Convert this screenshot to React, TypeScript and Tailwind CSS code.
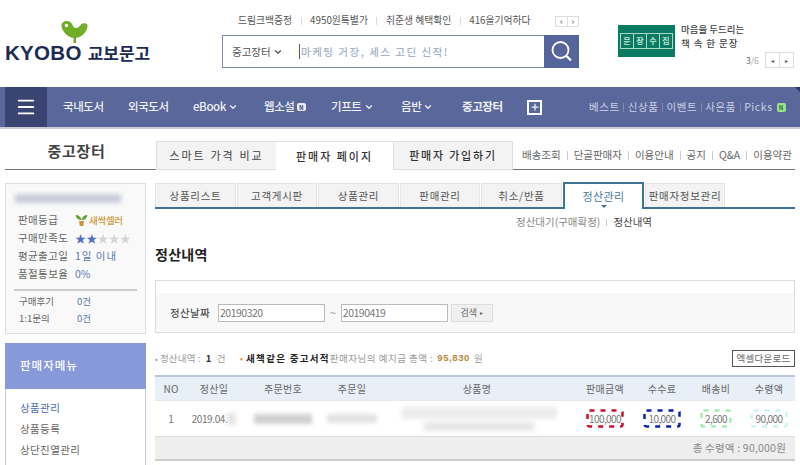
import React from "react";
import { ChevronDown, Menu, Plus } from "lucide-react";

const font = { fontFamily: '"Noto Sans CJK KR", "Liberation Sans", sans-serif' };

const utilLinks = ["드림크백증정", "4950원특별가", "취준생 혜택확인", "416을기억하다"];
const subLinks = ["배송조회", "단골판매자", "이용안내", "공지", "Q&A", "이용약관"];
const subTabs = [
  { label: "상품리스트", w: "w-[81px]" },
  { label: "고객게시판", w: "w-[80px]" },
  { label: "상품관리", w: "w-[81px]" },
  { label: "판매관리", w: "w-[80px]" },
  { label: "취소/반품", w: "w-[81px]" },
  { label: "정산관리", w: "w-[81px]", active: true },
  { label: "판매자정보관리", w: "w-[80px]" },
];
const cols = ["NO", "정산일", "주문번호", "주문일", "상품명", "판매금액", "수수료", "배송비", "수령액"];
const gridCols = "grid grid-cols-[32px_54px_84px_54px_196px_60px_54px_54px_52px]";

function Blur({ className }: { className: string }) {
  return <div className={`blur-[2px] ${className}`} />;
}

function Bird() {
  return (
    <svg width="27" height="22" viewBox="0 0 27 22">
      <path d="M12.5 15 L12.5 22 L15 22 L15 15 Z" fill="#72ad28" />
      <path
        d="M0.5 4.5 C0.5 1.5 3 0 6 0 C9.5 0 11.5 3 12.5 6 C14.5 8 18 7 20.5 3 C22 2 26 2 26.5 4 C27 10 21 17 13.5 17 C7 17 0.5 10 0.5 4.5 Z"
        fill="#72ad28"
      />
      <circle cx="5.5" cy="4.5" r="1.7" fill="#fff" />
    </svg>
  );
}

function Header() {
  return (
    <div className="flex h-[87px] bg-white">
      <div className="relative w-[222px] shrink-0">
        <div className="absolute left-[61px] top-[21px]">
          <Bird />
        </div>
        <div className="absolute left-[5px] top-[39px] flex items-baseline gap-[6px] whitespace-nowrap text-[#1c2c55]">
          <span className="text-[20.5px] font-bold leading-[28px] tracking-[0.3px]" style={{ fontFamily: '"Liberation Sans", sans-serif' }}>
            KYOBO
          </span>
          <span className="text-[17px] font-bold leading-[28px]">교보문고</span>
        </div>
      </div>

      <div className="w-[357px] shrink-0 pt-[14px]">
        <div className="flex h-[14px] items-center pl-[16px] text-[9.8px] leading-none text-[#555]">
          {utilLinks.map((t, i) => (
            <React.Fragment key={t}>
              {i > 0 && <span className="mx-[8.5px] h-[8px] w-px bg-[#ddd]" />}
              <span className="whitespace-nowrap">{t}</span>
            </React.Fragment>
          ))}
          <div className="ml-auto flex h-[11px] w-[24px] border border-[#ddd] text-[9px] text-[#555]">
            <span className="flex flex-1 items-center justify-center border-r border-[#ddd]">‹</span>
            <span className="flex flex-1 items-center justify-center">›</span>
          </div>
        </div>
        <div className="mt-[7px] flex h-[33px] border border-r-0 border-[#7d88ac]">
          <div className="flex w-[76px] items-center pl-[9px] text-[10.5px] text-[#555]">
            중고장터
            <ChevronDown size={10} strokeWidth={3} className="ml-[2px]" />
          </div>
          <div className="flex flex-1 items-center">
            <span className="h-[15px] w-px bg-[#555]" />
            <span className="ml-px whitespace-nowrap text-[10.5px] font-medium tracking-[1.5px] text-[#a3b2c6]">마케팅 거장, 세스 고딘 신작!</span>
          </div>
          <div className="-my-px flex w-[35px] items-center justify-center bg-[#55649b]">
            <svg width="23" height="23" viewBox="0 0 23 23" fill="none" stroke="#fff" strokeWidth="1.8">
              <circle cx="10.5" cy="10" r="8" />
              <path d="M16.5 16 L21 20.5" strokeWidth="2.4" />
            </svg>
          </div>
        </div>
      </div>

      <div className="relative flex-1">
        <div className="absolute left-[39px] top-[25px] flex h-[32px] w-[57px] items-center justify-center bg-[#0b7a63]">
          <div className="flex h-[16px] w-[53px] border border-[#a9d8c6] text-[8px] font-bold text-[#bfe6d4]">
            {["문", "장", "수", "집"].map((c) => (
              <span key={c} className="flex flex-1 items-center justify-center border-r border-[#a9d8c6] last:border-r-0">
                {c}
              </span>
            ))}
          </div>
        </div>
        <div className="absolute left-[102px] top-[22px] text-[9.5px] font-medium leading-[14px] text-[#444]">
          <div>마음을 두드리는</div>
          <div className="tracking-[0.9px]">책 속 한 문장</div>
        </div>
        <div className="absolute left-[167px] top-[52px] flex items-center text-[8.5px] text-[#666]">
          <span>
            3<span className="text-[#aaa]">/6</span>
          </span>
          <div className="ml-[6px] flex h-[16px] w-[29px] border border-[#ddd] text-[6px] text-[#555]">
            <span className="flex flex-1 items-center justify-center border-r border-[#ddd]">◂</span>
            <span className="flex flex-1 items-center justify-center">▸</span>
          </div>
        </div>
      </div>
    </div>
  );
}

function Nav() {
  return (
    <div className="relative flex h-[42px] border-b-2 border-[#c9ccd6] bg-[#5a679b] pl-[5px] text-white">
      <div className="flex w-[42px] items-center justify-center bg-[#3a4473]">
        <Menu size={22} strokeWidth={2} />
      </div>
      <div className="ml-[16px] flex items-center text-[11.5px] font-medium tracking-[-0.4px] text-[#eef0f6]">
        <span className="w-[65px]">국내도서</span>
        <span className="w-[65px]">외국도서</span>
        <span className="flex w-[71px] items-center">
          eBook
          <ChevronDown size={10} strokeWidth={3} className="ml-[2px]" />
        </span>
        <span className="flex w-[67px] items-center">
          웹소설
          <span className="ml-[2px] flex h-[8px] w-[9px] items-center justify-center rounded-[2px] bg-[#e8eaf2] text-[6px] font-bold text-[#3a4473]">N</span>
        </span>
        <span className="flex w-[70px] items-center">
          기프트
          <ChevronDown size={10} strokeWidth={3} className="ml-[2px]" />
        </span>
        <span className="flex w-[61px] items-center">
          음반
          <ChevronDown size={10} strokeWidth={3} className="ml-[2px]" />
        </span>
        <span className="w-[65px] font-bold">중고장터</span>
        <span className="flex h-[15px] w-[15px] items-center justify-center border-2 border-white">
          <Plus size={10} strokeWidth={3} />
        </span>
      </div>
      <div className="ml-[47px] flex items-center text-[10.5px] tracking-[0.6px] text-[#ccd2e4]">
        {["베스트", "신상품", "이벤트", "사은품", "Picks"].map((t, i) => (
          <React.Fragment key={t}>
            {i > 0 && <span className="mx-[3.5px] h-[9px] w-px bg-[#7e89b2]" />}
            <span className="whitespace-nowrap">{t}</span>
          </React.Fragment>
        ))}
        <span className="ml-[4px] flex h-[9px] w-[9px] items-center justify-center rounded-[2px] bg-[#9be08f] text-[6px] font-bold text-[#2e6b3a]">N</span>
      </div>
      <span className="absolute right-0 top-0 h-0 w-0 border-l-[5px] border-t-[5px] border-l-transparent border-t-[#2f3760]" />
    </div>
  );
}

function TopTabs() {
  return (
    <div className="flex h-[41px] pl-[5px] pt-[1px]">
      <div className="flex w-[151px] items-start justify-center border-b border-[#777] pr-[8px] pt-[10px] text-[15px] font-bold leading-[22px] tracking-[0.7px] text-[#444]">
        중고장터
      </div>
      <div className="flex self-end">
        <div className="flex h-[29px] w-[120px] items-center justify-center border-y border-l border-[#ddd] bg-[#f3f3f3] text-[11px] tracking-[2.1px] text-[#444]">
          스마트 가격 비교
        </div>
        <div className="flex h-[29px] w-[117px] items-center justify-center border-t border-[#ddd] bg-white text-[11px] font-medium tracking-[2px] text-[#333]">
          판매자 페이지
        </div>
        <div className="flex h-[29px] w-[120px] items-center justify-center border border-[#ddd] bg-[#f3f3f3] text-[11px] font-medium tracking-[1.8px] text-[#333]">
          판매자 가입하기
        </div>
      </div>
      <div className="flex h-[29px] w-[282px] items-center self-end border-b border-[#777] pl-[9px] text-[10.5px] text-[#666]">
        {subLinks.map((t, i) => (
          <React.Fragment key={t}>
            {i > 0 && <span className="mx-[6px] h-[9px] w-px bg-[#ccc]" />}
            <span className="whitespace-nowrap">{t}</span>
          </React.Fragment>
        ))}
      </div>
    </div>
  );
}

function Sidebar() {
  const label = "w-[57px] tracking-[0.4px] text-[#666]";
  return (
    <div className="w-[141px] shrink-0">
      <div className="h-[151px] border border-[#ddd] bg-[#f9f9f9] px-[8px] pt-[10px] text-[10.5px]">
        <Blur className="ml-[1px] h-[9px] w-[106px] bg-[#c9ccd9]" />
        <div className="mt-[8px] flex h-[18px] items-center pl-[4px]">
          <span className={label}>판매등급</span>
          <svg width="13" height="12" viewBox="0 0 13 12">
            <path d="M6.5 6 C3 6 1 4 0.5 1 C4 1 6 3 6.5 6 C7 3 9 1 12.5 1 C12 4 10 6 6.5 6 Z" fill="#66a030" />
            <path d="M4 7 H9 L8.2 12 H4.8 Z" fill="#c9973a" />
          </svg>
          <span className="ml-[1px] whitespace-nowrap text-[9.5px] font-medium tracking-[-0.3px] text-[#d29b3a]">새싹셀러</span>
        </div>
        <div className="flex h-[18px] items-center pl-[4px]">
          <span className={label}>구매만족도</span>
          <span className="whitespace-nowrap text-[11px] leading-none tracking-[0.2px]">
            <span className="text-[#4f6fc4]">★★</span>
            <span className="text-[#d5d5d5]">★★★</span>
          </span>
        </div>
        <div className="flex h-[18px] items-center pl-[4px]">
          <span className={label}>평균출고일</span>
          <span className="tracking-[1px] text-[#5a7ab0]">1일 이내</span>
        </div>
        <div className="flex h-[18px] items-center pl-[4px]">
          <span className={label}>품절통보율</span>
          <span className="text-[#5a7ab0]">0%</span>
        </div>
        <div className="mt-[6px] border-t-2 border-[#ccc] pt-[2px] text-[9.5px]">
          <div className="flex h-[17px] items-center pl-[5px]">
            <span className="w-[58px] text-[#666]">구매후기</span>
            <span className="text-[#5a7ab0]">0건</span>
          </div>
          <div className="flex h-[17px] items-center pl-[5px]">
            <span className="w-[58px] text-[#666]">1:1문의</span>
            <span className="text-[#5a7ab0]">0건</span>
          </div>
        </div>
      </div>
      <div className="mt-[9px] border-x border-[#c5cde3] bg-white">
        <div className="-mx-px flex h-[46px] items-center bg-[#8799d9] pl-[15px] text-[11.5px] font-medium tracking-[1px] text-white">
          판매자메뉴
        </div>
        <div className="h-[100px] pl-[14px] pt-[8px] text-[10.5px] leading-[21px] tracking-[0.4px] text-[#666]">
          <div className="text-[#4a6fa5]">상품관리</div>
          <div>상품등록</div>
          <div>상단진열관리</div>
        </div>
      </div>
    </div>
  );
}

function SubTabs() {
  return (
    <div>
      <div className="flex h-[26px] gap-[1px] border-b-2 border-[#3f7394]">
        {subTabs.map((t) =>
          t.active ? (
            <div
              key={t.label}
              className={`relative -mb-[2px] -mt-px flex h-[27px] ${t.w} items-center justify-center border-2 border-b-0 border-[#3f7394] bg-white pb-[1px] text-[11px] tracking-[0.4px] text-[#4a7a96]`}
            >
              {t.label}
              <span className="absolute bottom-[1px] left-1/2 -ml-[3px] h-0 w-0 border-x-[3px] border-t-[3px] border-x-transparent border-t-[#3f7394]" />
            </div>
          ) : (
            <div
              key={t.label}
              className={`flex ${t.w} items-center justify-center border-x border-t border-[#e4e4e4] bg-[#f3f3f3] text-[10.5px] tracking-[0.7px] text-[#555]`}
            >
              <span className="whitespace-nowrap">{t.label}</span>
            </div>
          ),
        )}
      </div>
      <div className="mt-[6px] flex h-[14px] items-center pl-[361px] text-[10.5px] text-[#888]">
        정산대기(구매확정)
        <span className="mx-[6px] h-[7px] w-px bg-[#ccc]" />
        <span className="text-[#444]">정산내역</span>
      </div>
    </div>
  );
}

function Filter() {
  const input = "h-[18px] w-[107px] border border-[#bbb] bg-white pl-px text-[10.5px] leading-[16px] tracking-[-0.5px] text-[#777]";
  return (
    <div className="h-[53px] border border-[#ddd] bg-white">
      <div className="mt-[12px] flex h-[39px] items-center bg-[#f8f8f8] pl-[14px] text-[10.5px]">
        <span className="w-[48px] whitespace-nowrap font-medium tracking-[0.3px] text-[#555]">정산날짜</span>
        <div className={input}>20190320</div>
        <span className="mx-[5px] text-[#999]">~</span>
        <div className={input}>20190419</div>
        <div className="ml-[3px] flex h-[18px] w-[42px] items-center justify-center border border-[#ddd] bg-[#f0f0f0] text-[9px] text-[#666]">
          검색
          <span className="ml-[3px] text-[6px]">▸</span>
        </div>
      </div>
    </div>
  );
}

// highlight boxes drawn over the amounts in the reference
function DashedCell({ value, color, w }: { value: string; color: string; w: number }) {
  return (
    <div className="flex items-center justify-center">
      <span className="relative flex h-[19px] items-center justify-center text-[10px] tracking-[-0.6px] text-[#777]" style={{ width: w }}>
        {value}
        <svg className="absolute inset-0" width={w} height={19} fill="none" stroke={color} strokeWidth="2.5" strokeDasharray="5 6">
          <rect x="1.5" y="1.5" width={w - 3} height={16} rx="2" />
        </svg>
      </span>
    </div>
  );
}

function SettlementTable() {
  return (
    <div>
      <div className={`${gridCols} h-[25px] items-center border-t-2 border-[#b8c6dd] bg-[#e9eff7] text-center text-[10px] tracking-[0.3px] text-[#666]`}>
        {cols.map((c) => (
          <div key={c} className="whitespace-nowrap">
            {c}
          </div>
        ))}
      </div>
      <div className={`${gridCols} h-[36px] items-center border-t border-[#e8e8e8] text-center text-[10px] text-[#777]`}>
        <div>1</div>
        <div className="flex items-center justify-center tracking-[-0.4px]">
          2019.04.
          <Blur className="h-[12px] w-[9px] bg-[#e6e6e6]" />
        </div>
        <div className="flex justify-center">
          <Blur className="h-[10px] w-[58px] bg-[#d0d0d0]" />
        </div>
        <div className="flex justify-center">
          <Blur className="h-[9px] w-[50px] bg-[#e2e2e2]" />
        </div>
        <div className="flex flex-col items-center gap-[3px] pl-[4px]">
          <Blur className="h-[12px] w-[155px] bg-[#ececec]" />
          <Blur className="h-[9px] w-[110px] bg-[#e6e6e6]" />
        </div>
        <DashedCell value="100,000" color="#c8102e" w={38} />
        <DashedCell value="10,000" color="#0a1fb0" w={38} />
        <DashedCell value="2,600" color="#a6eeb0" w={32} />
        <DashedCell value="90,000" color="#c9f5f5" w={38} />
      </div>
      <div className="flex h-[25px] items-center justify-end border-b-2 border-t border-b-[#ccc] border-t-[#ddd] bg-[#eee] pr-[9px] text-[10.5px] tracking-[0.2px] text-[#888]">
        총 수령액 : 90,000원
      </div>
    </div>
  );
}

export default function App() {
  return (
    <div className="h-[465px] w-[800px] overflow-hidden bg-white" style={font}>
      <Header />
      <Nav />
      <TopTabs />
      <div className="flex pl-[5px] pt-[13px]">
        <Sidebar />
        <div className="ml-[9px] w-[640px]">
          <SubTabs />
          <h2 className="mt-[15px] h-[20px] text-[14px] font-bold leading-[20px] tracking-[0.3px] text-[#222]">정산내역</h2>
          <div className="mt-[16px]">
            <Filter />
          </div>
          <div className="mt-[17px] flex h-[17px] items-center text-[9.5px] tracking-[0.2px] text-[#999]">
            <span className="mr-[2px] text-[8px]">•</span>
            정산내역 :
            <b className="mx-[5px] text-[#333]">1</b>건
            <span className="ml-[14px] mr-[3px] text-[#d9a04e]">•</span>
            <b className="tracking-[1.3px] text-[#222]">새책같은 중고서적</b>
            <span className="whitespace-nowrap tracking-[0.5px]">판매자님의 예치금 총액 :</span>
            <b className="mx-[4px] tracking-[0.6px] text-[#b58a3e]" style={{ fontFamily: '"Liberation Sans", sans-serif' }}>
              95,830
            </b>
            원
            <div className="ml-auto flex h-[17px] w-[63px] items-center justify-center border border-[#555] text-[9.5px] tracking-[0.3px] text-[#666]">
              엑셀다운로드
            </div>
          </div>
          <div className="mt-[8px]">
            <SettlementTable />
          </div>
        </div>
      </div>
    </div>
  );
}
